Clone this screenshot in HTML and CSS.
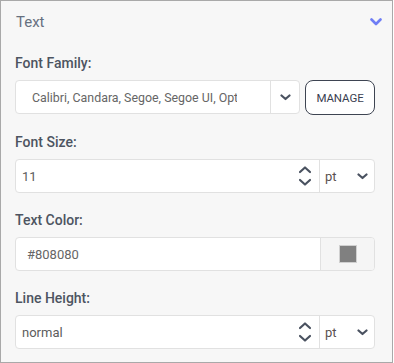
FILE: index.html
```html
<!DOCTYPE html>
<html>
<head>
<meta charset="utf-8">
<link rel="stylesheet" href="styles.css">
</head>
<body>
<div class="panel">
  <div class="header">
    <span class="title">Text</span>
    <svg class="toggle" width="12" height="8" viewBox="0 0 12 8"><polyline points="1.5,1.5 6,6 10.5,1.5" fill="none" stroke="#6f7ef5" stroke-width="2.6" stroke-linecap="round" stroke-linejoin="round"/></svg>
  </div>
  <div class="body">
    <div class="group">
      <div class="label">Font Family:</div>
      <div class="row">
        <div class="field select">
          <span class="value family">Calibri, Candara, Segoe, Segoe UI, Optima, Arial, sans-serif</span>
          <span class="caret"><svg width="11" height="7" viewBox="0 0 11 7"><polyline points="1.5,1.5 5.5,5 9.5,1.5" fill="none" stroke="#4a5260" stroke-width="2.2" stroke-linecap="round" stroke-linejoin="round"/></svg></span>
        </div>
        <button class="manage">MANAGE</button>
      </div>
    </div>
    <div class="group">
      <div class="label">Font Size:</div>
      <div class="field">
        <span class="value num">11</span>
        <svg class="spin" width="14" height="22" viewBox="0 0 14 22"><polyline points="2,7 7,2.5 12,7" fill="none" stroke="#4a5260" stroke-width="2.2" stroke-linecap="round" stroke-linejoin="round"/><polyline points="2,15 7,19.5 12,15" fill="none" stroke="#4a5260" stroke-width="2.2" stroke-linecap="round" stroke-linejoin="round"/></svg>
        <span class="unit">pt<svg width="11" height="7" viewBox="0 0 11 7"><polyline points="1.5,1.5 5.5,5 9.5,1.5" fill="none" stroke="#4a5260" stroke-width="2.2" stroke-linecap="round" stroke-linejoin="round"/></svg></span>
      </div>
    </div>
    <div class="group">
      <div class="label">Text Color:</div>
      <div class="field">
        <span class="value color">#808080</span>
        <span class="swatch-box"><span class="swatch"></span></span>
      </div>
    </div>
    <div class="group">
      <div class="label">Line Height:</div>
      <div class="field">
        <span class="value num">normal</span>
        <svg class="spin" width="14" height="22" viewBox="0 0 14 22"><polyline points="2,7 7,2.5 12,7" fill="none" stroke="#4a5260" stroke-width="2.2" stroke-linecap="round" stroke-linejoin="round"/><polyline points="2,15 7,19.5 12,15" fill="none" stroke="#4a5260" stroke-width="2.2" stroke-linecap="round" stroke-linejoin="round"/></svg>
        <span class="unit">pt<svg width="11" height="7" viewBox="0 0 11 7"><polyline points="1.5,1.5 5.5,5 9.5,1.5" fill="none" stroke="#4a5260" stroke-width="2.2" stroke-linecap="round" stroke-linejoin="round"/></svg></span>
      </div>
    </div>
  </div>
</div>
</body>
</html>
```
FILE: styles.css
```css
html, body {
  margin: 0;
  padding: 0;
  background: #ffffff;
}
.panel {
  width: 393px;
  height: 363px;
  box-sizing: border-box;
  border: 1px solid #a9a9a9;
  background: #f7f7f7;
  font-family: Roboto, "Liberation Sans", sans-serif;
}
.header {
  display: flex;
  justify-content: space-between;
  align-items: center;
  padding: 11px 10px 22px 15px;
  height: 20px;
}
.title {
  font-size: 15px;
  line-height: 20px;
  color: #66707f;
}
.toggle {
  display: block;
}
.body {
  padding: 0 17px 0 14px;
  display: flex;
  flex-direction: column;
  gap: 18px;
}
.label {
  font-size: 14px;
  font-weight: 500;
  line-height: 18px;
  color: #4d5461;
  margin-bottom: 8px;
}
.row {
  display: flex;
  gap: 5px;
}
.field {
  display: flex;
  align-items: center;
  height: 34px;
  box-sizing: border-box;
  border: 1px solid #e1e1e1;
  border-radius: 4px;
  background: #fff;
  overflow: hidden;
}
.select {
  width: 285px;
}
.value {
  flex: 1;
  font-size: 13px;
  color: #5c5c5c;
  white-space: nowrap;
  overflow: hidden;
}
.family {
  font-size: 12.4px;
  padding-left: 16px;
  margin-right: 33px;
  color: #666;
}
.num {
  padding-left: 6px;
}
.color {
  padding-left: 11px;
  color: #666;
}
.caret {
  width: 28px;
  height: 100%;
  border-left: 1px solid #e1e1e1;
  display: flex;
  align-items: center;
  justify-content: center;
}
.manage {
  width: 70px;
  height: 35px;
  box-sizing: border-box;
  border: 1px solid #3e4452;
  border-radius: 8px;
  background: #fff;
  font-family: Roboto, "Liberation Sans", sans-serif;
  font-size: 11.5px;
  letter-spacing: -0.1px;
  color: #3a4050;
  padding: 0;
}
.spin {
  display: block;
  margin-right: 7px;
}
.unit {
  width: 55px;
  height: 100%;
  box-sizing: border-box;
  border-left: 1px solid #e1e1e1;
  display: flex;
  align-items: center;
  justify-content: space-between;
  padding: 0 6px 0 5px;
  font-size: 13px;
  color: #5a5050;
}
.swatch-box {
  width: 54px;
  height: 100%;
  box-sizing: border-box;
  border-left: 1px solid #e1e1e1;
  background: #f5f5f5;
  display: flex;
  align-items: center;
  justify-content: center;
}
.swatch {
  width: 18px;
  height: 18px;
  box-sizing: border-box;
  border: 1px solid #d0d0d0;
  background: #808080;
}
```
